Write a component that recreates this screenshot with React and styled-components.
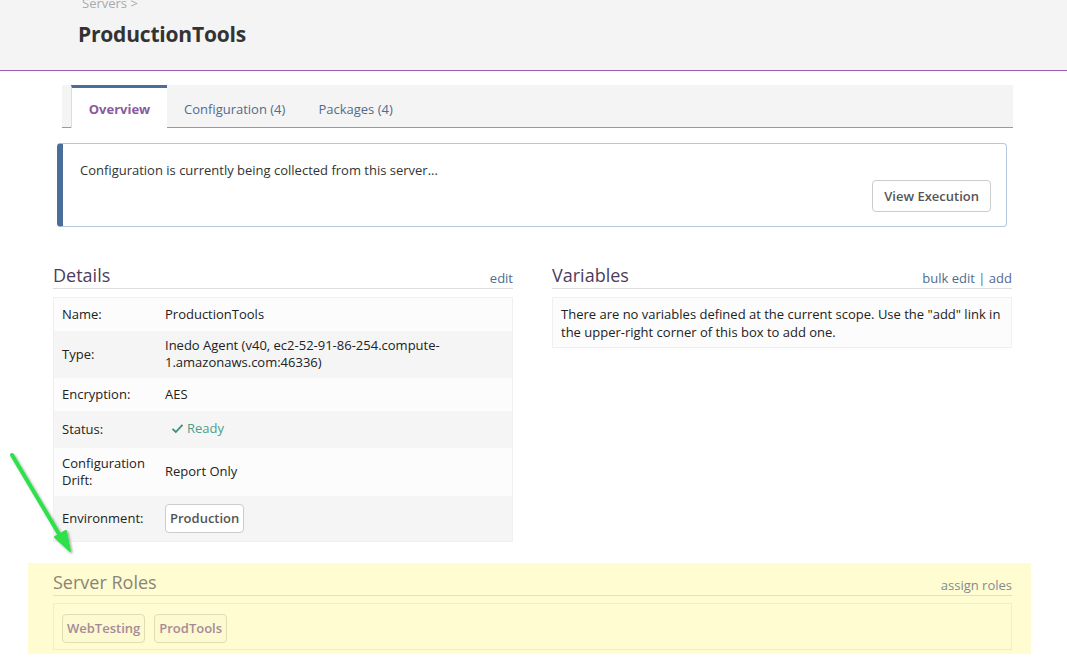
import React from 'react'
import styled, { createGlobalStyle } from 'styled-components'

const GlobalStyle = createGlobalStyle`
    html, body {
        margin: 0;
        padding: 0;
        background: #fff;
    }
    body {
        font-family: "Open Sans", "Noto Sans", "DejaVu Sans", sans-serif;
        font-size: 13px;
        color: #222;
    }
`

const details = [
    { label: 'Name:', value: 'ProductionTools', h: 33 },
    { label: 'Type:', value: 'Inedo Agent (v40, ec2-52-91-86-254.compute-1.amazonaws.com:46336)', h: 47 },
    { label: 'Encryption:', value: 'AES', h: 33 },
    { label: 'Status:', value: 'status', h: 37 },
    { label: 'Configuration Drift:', value: 'Report Only', h: 48 },
    { label: 'Environment:', value: 'env', h: 46 },
]

const CheckIcon = () => (
    <svg width="13" height="11" viewBox="0 0 13 11">
        <path d="M1.5 5.8 L4.8 9 L11.5 1.8" fill="none" stroke="#3d8f77" strokeWidth="1.8" />
    </svg>
)

const App = () => {
    return (
        <>
            <GlobalStyle />
            <PAGE>
                <HEADER>
                    <CRUMB>Servers &gt;</CRUMB>
                    <H1>ProductionTools</H1>
                </HEADER>

                <TABS>
                    <TAB active>Overview</TAB>
                    <TAB>Configuration (4)</TAB>
                    <TAB>Packages (4)</TAB>
                </TABS>

                <ALERT>
                    <p>Configuration is currently being collected from this server...</p>
                    <BUTTONROW>
                        <BUTTON>View Execution</BUTTON>
                    </BUTTONROW>
                </ALERT>

                <COLUMNS>
                    <SECTION>
                        <SECTIONHEAD>
                            <h2>Details</h2>
                            <LINKS><a>edit</a></LINKS>
                        </SECTIONHEAD>
                        <TABLE>
                            <tbody>
                                {details.map((d, i) => (
                                    <ROW key={d.label} odd={i % 2 === 1} style={{ height: d.h }}>
                                        <LABEL>{d.label}</LABEL>
                                        <VALUE>
                                            {d.value === 'status' ? (
                                                <STATUS><CheckIcon />Ready</STATUS>
                                            ) : d.value === 'env' ? (
                                                <TAG>Production</TAG>
                                            ) : d.value}
                                        </VALUE>
                                    </ROW>
                                ))}
                            </tbody>
                        </TABLE>
                    </SECTION>

                    <SECTION>
                        <SECTIONHEAD>
                            <h2>Variables</h2>
                            <LINKS><a>bulk edit</a> | <a>add</a></LINKS>
                        </SECTIONHEAD>
                        <NOTE>
                            There are no variables defined at the current scope. Use the "add" link
                            in the upper-right corner of this box to add one.
                        </NOTE>
                    </SECTION>
                </COLUMNS>

                <HIGHLIGHT>
                    <SECTIONHEAD faded>
                        <h2>Server Roles</h2>
                        <LINKS faded><a>assign roles</a></LINKS>
                    </SECTIONHEAD>
                    <ROLEBOX>
                        <TAG faded>WebTesting</TAG>
                        <TAG faded>ProdTools</TAG>
                    </ROLEBOX>
                </HIGHLIGHT>

                <ARROW width="80" height="110" viewBox="0 0 80 110">
                    <defs>
                        <filter id="sh" x="-50%" y="-50%" width="200%" height="200%">
                            <feDropShadow dx="1.5" dy="1.5" stdDeviation="1.2" floodColor="#000" floodOpacity="0.35" />
                        </filter>
                    </defs>
                    <g filter="url(#sh)">
                        <line x1="12" y1="8" x2="62" y2="92" stroke="#2ee04a" strokeWidth="4" strokeLinecap="round" />
                        <path d="M70 104 L55 90 L66 84 Z" fill="#2ee04a" stroke="#2ee04a" strokeWidth="2" strokeLinejoin="round" />
                    </g>
                </ARROW>
            </PAGE>
        </>
    )
}

export default App

//ページ全体
const PAGE = styled.div`
    position: relative;
    width: 1067px;
    height: 660px;
    overflow: hidden;
`

//ヘッダー
const HEADER = styled.header`
    display: flow-root;
    height: 70px;
    background: #f4f4f4;
    border-bottom: 1px solid #9b59b6;
    padding-left: 78px;
`

const CRUMB = styled.div`
    color: #aaa;
    font-size: 13px;
    line-height: 13px;
    margin-top: -3px;
    padding-left: 4px;
`

const H1 = styled.h1`
    margin: 10px 0 0 0;
    font-size: 21px;
    font-weight: 700;
    color: #333;
    letter-spacing: -0.2px;
`

//タブ
const TABS = styled.nav`
    display: flex;
    margin: 14px 54px 0 62px;
    height: 42px;
    background: #f4f4f4;
    border-bottom: 1px solid #8a9db5;
    padding-left: 9px;
`

const TAB = styled.div`
    display: flex;
    align-items: center;
    justify-content: center;
    padding: 2px 16px 0 16px;
    font-size: 13px;
    color: ${p => p.active ? '#8a5a9e' : '#4f6c8f'};
    font-weight: ${p => p.active ? 700 : 400};
    background: ${p => p.active ? '#fff' : 'transparent'};
    border-top: 3px solid ${p => p.active ? '#4a6e99' : 'transparent'};
    border-left: 1px solid ${p => p.active ? '#ddd' : 'transparent'};
    margin-bottom: -1px;
    min-width: ${p => p.active ? '63px' : 'auto'};
`

//お知らせ
const ALERT = styled.div`
    margin: 15px 60px 0 57px;
    height: 84px;
    box-sizing: border-box;
    border: 1px solid #b5c7dc;
    border-left: 6px solid #4a6e99;
    border-radius: 4px;
    padding: 17px 15px 0 17px;
    p {
        margin: 0;
        font-size: 13px;
        color: #333;
    }
`

const BUTTONROW = styled.div`
    display: flex;
    justify-content: flex-end;
    margin-top: 1px;
`

const BUTTON = styled.button`
    font-family: inherit;
    font-size: 13px;
    font-weight: 600;
    color: #555;
    background: #fff;
    border: 1px solid #ccc;
    border-radius: 4px;
    padding: 0 11px;
    height: 32px;
`

//詳細・変数
const COLUMNS = styled.div`
    display: grid;
    grid-template-columns: 460px 460px;
    column-gap: 39px;
    margin: 36px 0 0 53px;
`

const SECTION = styled.section``

const SECTIONHEAD = styled.div`
    display: flex;
    justify-content: space-between;
    align-items: flex-end;
    border-bottom: 1px solid ${p => p.faded ? '#e6e2b8' : '#ddd'};
    padding-bottom: 1px;
    h2 {
        margin: 0;
        font-size: 18px;
        font-weight: 400;
        color: ${p => p.faded ? '#8a8478' : '#4d3d5c'};
        line-height: 24px;
    }
`

const LINKS = styled.div`
    font-size: 13px;
    color: ${p => p.faded ? '#8a9496' : '#4f6c8f'};
    a {
        color: ${p => p.faded ? '#7f8c95' : '#4f6c8f'};
    }
`

const TABLE = styled.table`
    width: 100%;
    border-collapse: collapse;
    margin-top: 8px;
    border: 1px solid #f0f0f0;
`

const ROW = styled.tr`
    background: ${p => p.odd ? '#f5f5f5' : '#fcfcfc'};
`

const LABEL = styled.td`
    width: 88px;
    padding: 0 8px;
    font-size: 13px;
    color: #222;
    vertical-align: middle;
    line-height: 17px;
`

const VALUE = styled.td`
    padding: 0 8px 0 7px;
    font-size: 13px;
    color: #222;
    vertical-align: middle;
    line-height: 17px;
`

const STATUS = styled.span`
    display: inline-flex;
    align-items: center;
    gap: 3px;
    color: #4e9e86;
    padding-left: 6px;
`

const TAG = styled.span`
    display: inline-block;
    font-weight: 600;
    font-size: 13px;
    color: ${p => p.faded ? '#a48c96' : '#555'};
    background: ${p => p.faded ? '#fdf9d0' : '#fff'};
    border: 1px solid ${p => p.faded ? '#e0dcb4' : '#ccc'};
    border-radius: 4px;
    padding: 5px 4px;
    line-height: 17px;
`

const NOTE = styled.div`
    margin-top: 8px;
    background: #fcfcfc;
    border: 1px solid #f0f0f0;
    padding: 7px 8px 6px 8px;
    font-size: 13px;
    line-height: 18px;
    color: #222;
`

//ハイライト部分
const HIGHLIGHT = styled.section`
    margin: 21px 36px 0 28px;
    background: #fefcd0;
    padding: 7px 19px 0 25px;
    height: 91px;
    box-sizing: border-box;
`

const ROLEBOX = styled.div`
    display: flex;
    gap: 9px;
    margin-top: 7px;
    border: 1px solid #f3efc2;
    padding: 10px 8px 6px 8px;
`

//注釈の矢印
const ARROW = styled.svg`
    position: absolute;
    left: 0;
    top: 447px;
`
